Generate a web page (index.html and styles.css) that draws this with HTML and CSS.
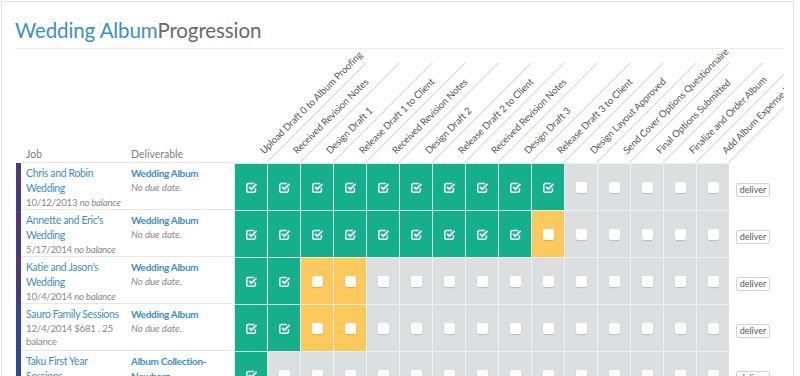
FILE: index.html
```html
<!DOCTYPE html>
<html lang="en">
<head>
  <meta charset="UTF-8" />
  <title>Wedding Album Progression</title>
  <link rel="stylesheet" href="styles.css">
</head>
<body>

<svg class="sprite" aria-hidden="true">
  <symbol id="tick" viewBox="0 0 14 14">
    <path d="M11.2 7.6v2.9a1.6 1.6 0 0 1-1.6 1.6H3.5a1.6 1.6 0 0 1-1.6-1.6V4.4a1.6 1.6 0 0 1 1.6-1.6h6.1" fill="none" stroke="#fff" stroke-width="1.6"/>
    <path d="M4.4 6.3l2.4 2.4 5.6-5.6" fill="none" stroke="#fff" stroke-width="2"/>
  </symbol>
</svg>

<div class="card">
  <h1 class="title"><span class="title-main">Wedding Album</span>Progression</h1>

  <div class="board">
    <table class="progress">
      <colgroup>
        <col class="c-bar"><col class="c-job"><col class="c-deliv">
        <col class="c-step"><col class="c-step"><col class="c-step"><col class="c-step"><col class="c-step">
        <col class="c-step"><col class="c-step"><col class="c-step"><col class="c-step"><col class="c-step">
        <col class="c-step"><col class="c-step"><col class="c-step"><col class="c-step"><col class="c-step">
        <col class="c-action">
      </colgroup>
      <thead>
        <tr>
          <th></th>
          <th class="head-text">Job</th>
          <th class="head-text">Deliverable</th>
          <th class="rot"><div><span>Upload Draft 0 to Album Proofing</span></div></th>
          <th class="rot"><div><span>Received Revision Notes</span></div></th>
          <th class="rot"><div><span>Design Draft 1</span></div></th>
          <th class="rot"><div><span>Release Draft 1 to Client</span></div></th>
          <th class="rot"><div><span>Received Revision Notes</span></div></th>
          <th class="rot"><div><span>Design Draft 2</span></div></th>
          <th class="rot"><div><span>Release Draft 2 to Client</span></div></th>
          <th class="rot"><div><span>Received Revision Notes</span></div></th>
          <th class="rot"><div><span>Design Draft 3</span></div></th>
          <th class="rot"><div><span>Release Draft 3 to Client</span></div></th>
          <th class="rot"><div><span>Design Layout Approved</span></div></th>
          <th class="rot"><div><span>Send Cover Options Questionnaire</span></div></th>
          <th class="rot"><div><span>Final Options Submitted</span></div></th>
          <th class="rot"><div><span>Finalize and Order Album</span></div></th>
          <th class="rot"><div><span>Add Album Expense Item</span></div></th>
          <th></th>
        </tr>
      </thead>
      <tbody>
        <tr>
          <td class="bar purple"></td>
          <td class="job"><a href="#">Chris and Robin Wedding</a><div class="meta">10/12/2013 <em>no balance</em></div></td>
          <td class="deliv"><a href="#">Wedding Album</a><div class="meta"><em>No due date.</em></div></td>
          <td class="step done"><svg class="tick"><use href="#tick"/></svg></td>
          <td class="step done"><svg class="tick"><use href="#tick"/></svg></td>
          <td class="step done"><svg class="tick"><use href="#tick"/></svg></td>
          <td class="step done"><svg class="tick"><use href="#tick"/></svg></td>
          <td class="step done"><svg class="tick"><use href="#tick"/></svg></td>
          <td class="step done"><svg class="tick"><use href="#tick"/></svg></td>
          <td class="step done"><svg class="tick"><use href="#tick"/></svg></td>
          <td class="step done"><svg class="tick"><use href="#tick"/></svg></td>
          <td class="step done"><svg class="tick"><use href="#tick"/></svg></td>
          <td class="step done"><svg class="tick"><use href="#tick"/></svg></td>
          <td class="step"><span class="box"></span></td>
          <td class="step"><span class="box"></span></td>
          <td class="step"><span class="box"></span></td>
          <td class="step"><span class="box"></span></td>
          <td class="step"><span class="box"></span></td>
          <td class="action"><button class="deliver">deliver</button></td>
        </tr>
        <tr>
          <td class="bar purple"></td>
          <td class="job"><a href="#">Annette and Eric's Wedding</a><div class="meta">5/17/2014 <em>no balance</em></div></td>
          <td class="deliv"><a href="#">Wedding Album</a><div class="meta"><em>No due date.</em></div></td>
          <td class="step done"><svg class="tick"><use href="#tick"/></svg></td>
          <td class="step done"><svg class="tick"><use href="#tick"/></svg></td>
          <td class="step done"><svg class="tick"><use href="#tick"/></svg></td>
          <td class="step done"><svg class="tick"><use href="#tick"/></svg></td>
          <td class="step done"><svg class="tick"><use href="#tick"/></svg></td>
          <td class="step done"><svg class="tick"><use href="#tick"/></svg></td>
          <td class="step done"><svg class="tick"><use href="#tick"/></svg></td>
          <td class="step done"><svg class="tick"><use href="#tick"/></svg></td>
          <td class="step done"><svg class="tick"><use href="#tick"/></svg></td>
          <td class="step due"><span class="box"></span></td>
          <td class="step"><span class="box"></span></td>
          <td class="step"><span class="box"></span></td>
          <td class="step"><span class="box"></span></td>
          <td class="step"><span class="box"></span></td>
          <td class="step"><span class="box"></span></td>
          <td class="action"><button class="deliver">deliver</button></td>
        </tr>
        <tr>
          <td class="bar purple"></td>
          <td class="job"><a href="#">Katie and Jason's Wedding</a><div class="meta">10/4/2014 <em>no balance</em></div></td>
          <td class="deliv"><a href="#">Wedding Album</a><div class="meta"><em>No due date.</em></div></td>
          <td class="step done"><svg class="tick"><use href="#tick"/></svg></td>
          <td class="step done"><svg class="tick"><use href="#tick"/></svg></td>
          <td class="step due"><span class="box"></span></td>
          <td class="step due"><span class="box"></span></td>
          <td class="step"><span class="box"></span></td>
          <td class="step"><span class="box"></span></td>
          <td class="step"><span class="box"></span></td>
          <td class="step"><span class="box"></span></td>
          <td class="step"><span class="box"></span></td>
          <td class="step"><span class="box"></span></td>
          <td class="step"><span class="box"></span></td>
          <td class="step"><span class="box"></span></td>
          <td class="step"><span class="box"></span></td>
          <td class="step"><span class="box"></span></td>
          <td class="step"><span class="box"></span></td>
          <td class="action"><button class="deliver">deliver</button></td>
        </tr>
        <tr>
          <td class="bar navy"></td>
          <td class="job"><a href="#">Sauro Family Sessions</a><div class="meta">12/4/2014 $681 . 25 balance</div></td>
          <td class="deliv"><a href="#">Wedding Album</a><div class="meta"><em>No due date.</em></div></td>
          <td class="step done"><svg class="tick"><use href="#tick"/></svg></td>
          <td class="step done"><svg class="tick"><use href="#tick"/></svg></td>
          <td class="step due"><span class="box"></span></td>
          <td class="step due"><span class="box"></span></td>
          <td class="step"><span class="box"></span></td>
          <td class="step"><span class="box"></span></td>
          <td class="step"><span class="box"></span></td>
          <td class="step"><span class="box"></span></td>
          <td class="step"><span class="box"></span></td>
          <td class="step"><span class="box"></span></td>
          <td class="step"><span class="box"></span></td>
          <td class="step"><span class="box"></span></td>
          <td class="step"><span class="box"></span></td>
          <td class="step"><span class="box"></span></td>
          <td class="step"><span class="box"></span></td>
          <td class="action"><button class="deliver">deliver</button></td>
        </tr>
        <tr>
          <td class="bar navy"></td>
          <td class="job"><a href="#">Taku First Year Sessions</a><div class="meta">1/10/2015 <em>no balance</em></div></td>
          <td class="deliv"><a href="#">Album Collection-Newborn</a><div class="meta"><em>No due date.</em></div></td>
          <td class="step done"><svg class="tick"><use href="#tick"/></svg></td>
          <td class="step"><span class="box"></span></td>
          <td class="step"><span class="box"></span></td>
          <td class="step"><span class="box"></span></td>
          <td class="step"><span class="box"></span></td>
          <td class="step"><span class="box"></span></td>
          <td class="step"><span class="box"></span></td>
          <td class="step"><span class="box"></span></td>
          <td class="step"><span class="box"></span></td>
          <td class="step"><span class="box"></span></td>
          <td class="step"><span class="box"></span></td>
          <td class="step"><span class="box"></span></td>
          <td class="step"><span class="box"></span></td>
          <td class="step"><span class="box"></span></td>
          <td class="step"><span class="box"></span></td>
          <td class="action"><button class="deliver">deliver</button></td>
        </tr>
      </tbody>
    </table>
  </div>
</div>

</body>
</html>
```

FILE: styles.css
```css
html, body {
  margin: 0; padding: 0;
  height: 100%;
  background: #fff;
  color: #555;
  font-family: 'Lato', 'Liberation Sans', sans-serif;
  overflow: hidden;
}

.sprite {
  display: none;
}

.card {
  margin: 1px 6px 0 1px;
  border: 1px solid #e4e2e6;
  border-bottom: none;
  padding: 16px 9px 0 13px;
  height: 400px;
  background: #fff;
}

.title {
  margin: 0 0 6px;
  font-size: 20.5px;
  line-height: 24px;
  font-weight: 400;
  color: #6a6a6a;
  letter-spacing: -0.1px;
}

.title-main {
  color: #3b8fc7;
}

.board {
  border-top: 1px solid #ececec;
  overflow: hidden;
}

.progress {
  width: 768px;
  table-layout: fixed;
  border-collapse: separate;
  border-spacing: 0;
}

.c-bar { width: 6px; }
.c-job { width: 105px; }
.c-deliv { width: 108px; }
.c-step { width: 33px; }
.c-action { width: 54px; }

.progress thead tr {
  height: 114px;
}

.progress th {
  padding: 0;
  vertical-align: bottom;
  font-weight: 400;
  text-align: left;
}

.head-text {
  font-size: 10.5px;
  line-height: 13px;
  color: #7d7d7d;
  padding: 0 5px 1px !important;
  border-bottom: 1px solid #e6e6e6;
}

.rot {
  white-space: nowrap;
}

.rot div {
  width: 141px;
  transform-origin: 0 100%;
  transform: translateX(33px) rotate(-45deg);
  border-bottom: 1px solid #d6d6d6;
  font-size: 9.7px;
  line-height: 11px;
  letter-spacing: -0.1px;
  color: #555;
  padding: 0 0 5px 4px;
  box-sizing: border-box;
}

.progress tbody tr {
  height: 47px;
}

.progress td {
  padding: 0;
}

.bar {
  border-left: 1px solid #fff;
}

.bar.purple { background: #4b3b7d; }
.bar.navy { background: #2d4897; }

.job, .deliv {
  vertical-align: top;
  padding: 3px 0 0 5px !important;
  border-bottom: 1px solid #e6e6e6;
  font-size: 10.5px;
  line-height: 15px;
}

.job a, .deliv a {
  color: #3b8fc7;
  text-decoration: none;
  letter-spacing: -0.35px;
}

.deliv a {
  font-size: 10px;
  font-weight: 700;
  letter-spacing: -0.3px;
  display: block;
  padding-right: 12px;
}

.meta {
  font-size: 9.8px;
  line-height: 13px;
  letter-spacing: -0.3px;
  color: #8a8a8a;
}

.deliv .meta {
  letter-spacing: -0.1px;
}

.meta em {
  font-style: italic;
}

.step {
  background: #dcdfe0;
  border-left: 1px solid rgba(255,255,255,0.55);
  border-top: 1px solid rgba(255,255,255,0.55);
  text-align: center;
  vertical-align: middle;
  line-height: 0;
}

.step.done {
  background: #14b08c;
  border-color: rgba(255,255,255,0.8);
}

.step.due {
  background: #fdc95d;
  border-color: rgba(255,255,255,0.8);
}

.tick {
  width: 13px;
  height: 13px;
}

.box {
  display: inline-block;
  width: 11px;
  height: 11px;
  background: #fff;
  border-radius: 2px;
  box-shadow: 0 1px 1px rgba(0,0,0,0.15);
}

.action {
  text-align: center;
  vertical-align: middle;
  border-top: 1px solid #fff;
}

.deliver {
  font-family: 'Lato', 'Liberation Sans', sans-serif;
  font-size: 9px;
  line-height: 12px;
  color: #555;
  background: #fff;
  border: 1px solid #d2d2d2;
  border-radius: 2px;
  padding: 0 3px;
  margin-right: 6px;
}
```
